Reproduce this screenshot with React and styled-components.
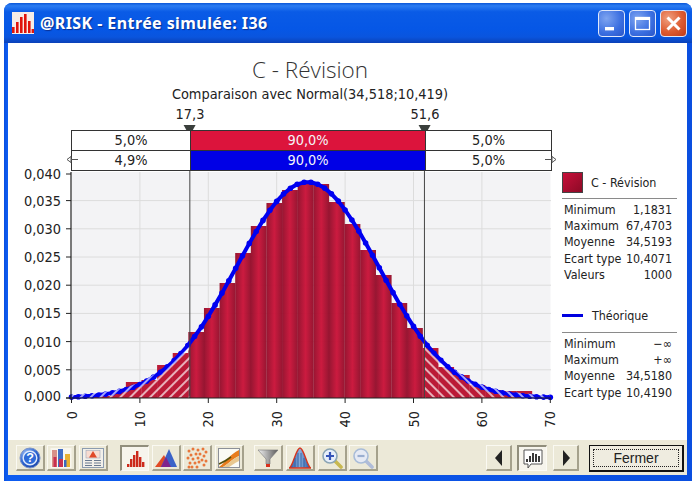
import React from "react";
import styled, { createGlobalStyle } from "styled-components";

const Global = createGlobalStyle`
  html, body { margin: 0; padding: 0; background: #fff; }
  #root { width: 693px; height: 481px; overflow: hidden; }
`;

const UI = `"DejaVu Sans Condensed", "DejaVu Sans", sans-serif`;

const Page = styled.div`
  width: 693px;
  height: 481px;
  padding: 3px 1px 0 4px;
  box-sizing: border-box;
  font-family: ${UI};
  color: #222;
`;
const Window = styled.div`
  height: 478px;
  display: flex;
  flex-direction: column;
  border-radius: 8px 8px 0 0;
  background: linear-gradient(90deg, #0a4fe0 0, #0d5cf0 3px, #0a4fe0 100%);
  overflow: hidden;
`;
const TitleBar = styled.div`
  height: 40px;
  flex: none;
  display: flex;
  align-items: center;
  padding: 0 5px 0 8px;
  box-sizing: border-box;
  background: linear-gradient(180deg, #0a56d8 0, #2b7cf2 7%, #0a5be6 22%, #0657e6 65%, #0a55de 85%, #0a41b8 100%);
`;
const AppIcon = styled.svg`
  width: 22px;
  height: 22px;
  flex: none;
`;
const TitleText = styled.div`
  margin-left: 6px;
  flex: 1;
  font: bold 16px "Noto Sans", sans-serif;
  letter-spacing: 0.42px;
  color: #fff;
  text-shadow: 1px 1px 1px #0a2f90;
`;
const WinBtn = styled.div`
  width: 27px;
  height: 27px;
  margin-left: ${(p) => p.$gap}px;
  border: 1px solid #dfe8fb;
  border-radius: 4px;
  box-sizing: border-box;
  display: flex;
  align-items: center;
  justify-content: center;
  background: ${(p) =>
    p.$close
      ? "radial-gradient(circle at 30% 30%, #f0a080, #dd5b30 55%, #c03a18)"
      : "radial-gradient(circle at 30% 30%, #7ea4f0, #3a6ee0 60%, #2a55c8)"};
`;
const Client = styled.div`
  flex: 1;
  margin: 0 5px 6px 4px;
  display: flex;
  flex-direction: column;
  min-height: 0;
`;
const Content = styled.div`
  flex: 1;
  background: #fff;
  display: flex;
  flex-direction: column;
`;
const ChartTitle = styled.div`
  width: 604px;
  margin-top: 13px;
  text-align: center;
  font: 300 22.5px/28px "Open Sans", sans-serif;
  color: #333;
`;
const Subtitle = styled.div`
  width: 604px;
  margin-top: 2px;
  text-align: center;
  font-size: 14.4px;
  line-height: 16px;
`;
const Columns = `
  display: grid;
  grid-template-columns: 119px 235px 127px;
  margin-left: 63px;
  width: 481px;
`;
const LimitRow = styled.div`
  ${Columns}
  height: 24px;
  margin-top: 4px;
  box-sizing: border-box;
  font-size: 14.4px;
  line-height: 16px;
`;
const Limit = styled.div`
  grid-column: ${(p) => p.$col};
  justify-self: start;
  position: relative;
  transform: translateX(-50%);
  text-align: center;
`;
const Pointer = styled.svg`
  position: absolute;
  left: 50%;
  margin-left: -7px;
  top: 18px;
  width: 14px;
  height: 12px;
  z-index: 2;
`;
const PercentTable = styled.div`
  ${Columns}
  height: 41px;
  position: relative;
  border: 1px solid #333;
  box-sizing: border-box;
  grid-template-columns: 118px 235px 126px;
  grid-template-rows: 20px 19px;
`;
const Cell = styled.div`
  background: ${(p) => p.$bg || "#fff"};
  color: ${(p) => (p.$bg ? "#f4f4f8" : "#222")};
  font-size: 14.4px;
  line-height: 19px;
  text-align: center;
  border-bottom: ${(p) => (p.$top ? "1px solid #333" : "none")};
  border-left: ${(p) => (p.$div ? "1px solid #333" : "none")};
  box-sizing: border-box;
`;
const ArrowMark = styled.svg`
  position: absolute;
  top: 24px;
  ${(p) => (p.$right ? "right: -5px;" : "left: -5px;")}
  width: 11px;
  height: 9px;
`;
const ChartRow = styled.div`
  display: flex;
  height: 265px;
`;
const Plot = styled.svg`
  width: 548px;
  height: 265px;
  flex: none;
  overflow: visible;
  font-family: ${UI};
`;
const Legend = styled.div`
  width: 115px;
  margin-left: 6px;
  padding-top: 1px;
  font-size: 12.4px;
  color: #222;
`;
const LegendHead = styled.div`
  display: flex;
  align-items: center;
  height: 21px;
  margin-top: ${(p) => p.$mt || 0}px;
  gap: ${(p) => p.$gap || 8}px;
`;
const Swatch = styled.div`
  width: 21px;
  height: 21px;
  box-sizing: border-box;
  border: 1px solid #444;
  background: linear-gradient(135deg, #c8103a, #8c0a26);
  flex: none;
`;
const BlueLine = styled.div`
  width: 21px;
  height: 3px;
  background: #0000e0;
  flex: none;
`;
const Rule = styled.div`
  height: 1px;
  background: #8a8a8a;
  margin: ${(p) => p.$m};
`;
const StatRow = styled.div`
  display: flex;
  justify-content: space-between;
  height: 16.2px;
  line-height: 16px;
  padding: 0 5px 0 2px;
`;
const Toolbar = styled.div`
  height: 35px;
  flex: none;
  background: #ece9d8;
  display: flex;
  align-items: flex-start;
  padding: 5px 0 0 7px;
  box-sizing: border-box;
`;
const ToolBtn = styled.div`
  width: ${(p) => p.$w || 29}px;
  height: 26px;
  margin-left: ${(p) => p.$gap || 2}px;
  flex: none;
  box-sizing: border-box;
  display: flex;
  align-items: center;
  justify-content: center;
  background: ${(p) => (p.$on ? "#f6f4ec" : "#ece9d8")};
  border: 1px solid;
  border-width: ${(p) => (p.$on ? "2px 1px 1px 2px" : "1px 2px 2px 1px")};
  border-color: ${(p) =>
    p.$on ? "#918e7c #fbfaf4 #fbfaf4 #918e7c" : "#faf9f2 #a5a18c #a5a18c #faf9f2"};
`;
const Icon = styled.svg`
  width: 22px;
  height: 22px;
`;
const CloseBtn = styled.div`
  width: 95px;
  height: 27px;
  margin-left: 10px;
  box-sizing: border-box;
  border: 1px solid #111;
  border-width: 1px 2px 2px 1px;
  background: #efece0;
  padding: 3px;
  flex: none;
`;
const CloseLabel = styled.div`
  height: 100%;
  border: 1px dotted #222;
  box-sizing: border-box;
  text-align: center;
  font: 14px/17px "Liberation Sans", sans-serif;
  color: #222;
`;

/* ---------- chart data ---------- */
const X = (v) => 71.5 + v * 6.84;
const Y = (v) => 398 - (v / 0.005) * 28.2;
const pdf = (v) =>
  (1 / (10.419 * Math.sqrt(2 * Math.PI))) * Math.exp(-((v - 34.518) ** 2) / (2 * 10.419 ** 2));
const curve = Array.from({ length: 71 }, (_, i) => [+X(i).toFixed(1), +Y(pdf(i)).toFixed(1)]);
const curvePts = curve.map((p) => p.join(",")).join(" ");
const tailPoly = (a, b) => {
  const pts = [];
  for (let v = a; v <= b + 0.001; v += 0.25) pts.push(`${X(v).toFixed(1)},${(Y(pdf(v)) - 2.5).toFixed(1)}`);
  return `${X(a)},397.5 ${pts.join(" ")} ${X(b)},397.5`;
};
const BW = 15.62;
const barsData = [396.5, 396, 392, 382, 380, 365, 353, 332, 308, 283, 253, 226, 203, 190, 184, 184, 202, 224, 250, 275, 303, 328, 348, 367, 375, 385, 390, 391, 391];

const Chart = () => (
  <Plot viewBox="8 171 548 265">
    <defs>
      <linearGradient id="bar" x1="0" x2="1" y1="0" y2="0">
        <stop offset="0" stopColor="#930d2a" />
        <stop offset="0.5" stopColor="#ca1238" />
        <stop offset="1" stopColor="#930d2a" />
      </linearGradient>
      <pattern id="hatchL" width="7" height="7" patternUnits="userSpaceOnUse" patternTransform="rotate(-45)">
        <line x1="0" x2="7" y1="2" y2="2" stroke="#fff" strokeWidth="1.3" />
      </pattern>
      <pattern id="hatchR" width="7" height="7" patternUnits="userSpaceOnUse" patternTransform="rotate(45)">
        <line x1="0" x2="7" y1="2" y2="2" stroke="#fff" strokeWidth="1.3" />
      </pattern>
    </defs>
    <rect x="71.5" y="172" width="479" height="226" fill="#f3f3f5" />
    {[10, 20, 30, 40, 50, 60].map((v) => (
      <line key={v} x1={X(v)} x2={X(v)} y1="172" y2="398" stroke="#dcdcdc" strokeWidth="1" />
    ))}
    {[0.005, 0.01, 0.015, 0.02, 0.025, 0.03, 0.035].map((v) => (
      <line key={v} x1="71" x2="551" y1={Y(v)} y2={Y(v)} stroke="#dcdcdc" strokeWidth="1" />
    ))}
    {barsData.map((t, k) => {
      const x = 79 + BW * k;
      const tail = x + BW < 196 || x > 420;
      return <rect key={k} x={x} y={t} width={BW + 0.2} height={398 - t} fill={tail ? "#b8112f" : "url(#bar)"} fillOpacity="0.96" />;
    })}
    <polyline points={curvePts} fill="none" stroke="#0000f0" strokeWidth="4" strokeLinejoin="round" />
    {curve.map(([cx, cy]) => (
      <circle key={cx} cx={cx} cy={cy} r="2.8" fill="#0000f0" />
    ))}
    <polygon points={tailPoly(0, 17.3)} fill="url(#hatchL)" />
    <polygon points={tailPoly(51.6, 70)} fill="url(#hatchR)" />
    <line x1={X(17.3)} x2={X(17.3)} y1="171" y2="398" stroke="#444" strokeWidth="1" />
    <line x1={X(51.6)} x2={X(51.6)} y1="171" y2="398" stroke="#444" strokeWidth="1" />
    <line x1="71" x2="71" y1="172" y2="398.5" stroke="#222" strokeWidth="1.2" />
    <line x1="66" x2="551" y1="398" y2="398" stroke="#222" strokeWidth="1.2" />
    {[0, 0.005, 0.01, 0.015, 0.02, 0.025, 0.03, 0.035, 0.04].map((v) => (
      <g key={v}>
        <line x1="66" x2="71" y1={v === 0.04 ? 174 : Y(v)} y2={v === 0.04 ? 174 : Y(v)} stroke="#222" strokeWidth="1" />
        <text x="61" y={(v === 0.04 ? 174 : v === 0 ? 396 : Y(v)) + 5} textAnchor="end" fontSize="14.4" fill="#222">
          {v.toFixed(3).replace(".", ",")}
        </text>
      </g>
    ))}
    {[0, 10, 20, 30, 40, 50, 60, 70].map((v) => (
      <g key={v}>
        <line x1={X(v)} x2={X(v)} y1="398" y2="403" stroke="#222" strokeWidth="1" />
        <text transform={`translate(${X(v) + 5} 411) rotate(-90)`} textAnchor="end" fontSize="14.4" fill="#222">
          {v}
        </text>
      </g>
    ))}
  </Plot>
);

const Stat = ({ k, v }) => (
  <StatRow>
    <span>{k}</span>
    <span>{v}</span>
  </StatRow>
);

const icons = {
  help: (
    <>
      <defs>
        <radialGradient id="hb" cx="0.35" cy="0.3" r="0.8">
          <stop offset="0" stopColor="#a8c8f8" />
          <stop offset="0.6" stopColor="#2a62d0" />
          <stop offset="1" stopColor="#1a3fa0" />
        </radialGradient>
      </defs>
      <circle cx="11" cy="11" r="10" fill="url(#hb)" stroke="#7b93c8" />
      <circle cx="11" cy="11" r="6.8" fill="#2e6ad8" stroke="#dfe9fb" strokeWidth="1.4" />
      <text x="11" y="15.4" textAnchor="middle" fontSize="12.5" fontWeight="bold" fill="#fff" fontFamily="Liberation Sans">?</text>
    </>
  ),
  bars: (
    <>
      <rect x="0.5" y="1" width="21" height="20" fill="#f8f6ee" />
      <rect x="2" y="3" width="5" height="17" fill="#d89088" />
      <rect x="8" y="2" width="5" height="18" fill="#3f6cc4" />
      <rect x="3.5" y="10" width="3" height="10" fill="#c83050" />
      <rect x="9" y="12" width="4" height="8" fill="#c83050" />
      <rect x="15" y="7" width="5" height="13" fill="#e8b030" />
      <rect x="14" y="13" width="2.5" height="7" fill="#3a68c0" />
    </>
  ),
  report: (
    <>
      <rect x="0.5" y="1.5" width="21" height="19" fill="#f2f0ea" stroke="#8c9cb0" />
      <rect x="4" y="3.5" width="14" height="7.5" fill="#f8dcd0" stroke="#a0a8b8" strokeWidth="0.6" />
      <polygon points="11,4 15,10.5 7,10.5" fill="#e04828" />
      <path d="M3 13.5h7M12 13.5h7M3 16h7M12 16h7M3 18.5h7M12 18.5h7" stroke="#6a7a90" strokeWidth="1" />
    </>
  ),
  hist: (
    <path
      d="M3 19v-3h2.4v3zM6 19v-8h2.4v8zM9 19v-12h2.4v12zM12 19V3h2.4v16zM15 19v-10h2.4v10zM18 19v-5h2.4v5z"
      fill="#cc2a1c"
    />
  ),
  peaks: (
    <>
      <polygon points="0,20 9,8 15,20" fill="#e04a26" />
      <polygon points="6,20 14,2 22,20" fill="#3a62c8" />
      <polygon points="6,20 11,10 16,20" fill="#80248c" />
    </>
  ),
  scatter: (
    <g fill="#e8763a">
      {[[3,4],[7,2],[12,3],[17,2],[20,5],[5,8],[10,7],[14,7],[18,9],[2,11],[7,12],[12,11],[16,13],[20,14],[4,16],[9,16],[13,15],[18,18],[6,20],[11,20],[3,20]].map(([x,y],i)=>(
        <circle key={i} cx={x} cy={y} r="1.5" />
      ))}
    </g>
  ),
  area: (
    <>
      <rect x="0.5" y="1.5" width="21" height="19" fill="#fafaf4" stroke="#8c9098" />
      <path d="M1 20C8 15 12 7 21 3V9C14 12 9 18 5 20z" fill="#e87c1c" />
      <path d="M5 20C9 18 14 12 21 9V14C16 16 13 19 11 20z" fill="#e8c890" />
      <path d="M1 17C6 15 9 13 13 10" stroke="#55500c" strokeWidth="1.6" fill="none" />
    </>
  ),
  funnel: (
    <>
      <defs>
        <linearGradient id="fn" x1="0" x2="1">
          <stop offset="0" stopColor="#f2f2f2" />
          <stop offset="1" stopColor="#5a5a5a" />
        </linearGradient>
      </defs>
      <polygon points="1,3 21,3 13,12 13,17 9,17 9,12" fill="url(#fn)" stroke="#777" strokeWidth="0.6" />
      <rect x="9" y="17" width="4" height="3" fill="#d8301c" />
    </>
  ),
  bell: (
    <>
      <defs>
        <linearGradient id="bl" x1="0" x2="1">
          <stop offset="0" stopColor="#1f4fa0" />
          <stop offset="0.5" stopColor="#8cb0dc" />
          <stop offset="1" stopColor="#1f4fa0" />
        </linearGradient>
      </defs>
      <path d="M0 21C4 20 7 1 11 1s7 19 11 20z" fill="url(#bl)" stroke="#d8341c" strokeWidth="1.4" />
      <path d="M6 20V11M9 20V6M12 20V6M15 20V11" stroke="#27589e" strokeWidth="0.8" />
    </>
  ),
  zoomIn: (
    <>
      <line x1="14" y1="14" x2="20" y2="20" stroke="#c8b850" strokeWidth="3.6" strokeLinecap="round" />
      <circle cx="9" cy="9" r="7" fill="#e6eefa" stroke="#8aa4b4" strokeWidth="1.6" />
      <path d="M5 9h8M9 5v8" stroke="#3454b8" strokeWidth="2.2" />
    </>
  ),
  zoomOut: (
    <>
      <line x1="14" y1="14" x2="20" y2="20" stroke="#b0bcd8" strokeWidth="3.6" strokeLinecap="round" />
      <circle cx="9" cy="9" r="7" fill="#e6eaf4" stroke="#a8bcd8" strokeWidth="1.6" />
      <path d="M5.5 9h7" stroke="#9aaed0" strokeWidth="2.2" />
    </>
  ),
  prev: <polygon points="14,3 14,19 7,11" fill="#222" />,
  next: <polygon points="8,3 8,19 15,11" fill="#222" />,
  note: (
    <>
      <path d="M2 2h18v14H9l-3 4v-4H2z" fill="#fff" stroke="#555" />
      <path d="M4 14v-3h2v3zM7 14V8h2v6zM10 14V5h2v9zM13 14V6h2v8zM16 14v-6h2v6z" fill="#3a3a3a" />
    </>
  ),
};

const Tool = ({ name, w, gap, on }) => (
  <ToolBtn $w={w} $gap={gap} $on={on}>
    <Icon viewBox="0 0 22 22">{icons[name]}</Icon>
  </ToolBtn>
);

const Marker = () => (
  <Pointer viewBox="0 0 14 12">
    <polygon points="1,1 13,1 7,12" fill="#3a3f3c" />
  </Pointer>
);

export default function App() {
  return (
    <Page>
      <Global />
      <Window>
        <TitleBar>
          <AppIcon viewBox="0 0 22 22">
            <rect width="22" height="22" fill="#f6ece6" />
            <path d="M0 21v-6h2.6v6zM4 21v-11h2.6v11zM8 21V5h2.6v16zM12 21V2h2.6v19zM16 21V9h2.6v12zM19.6 21v-4h2.4v4z" fill="#e0140c" />
          </AppIcon>
          <TitleText>@RISK - Entrée simulée: I36</TitleText>
          <WinBtn $gap={0}>
            <svg width="19" height="19" viewBox="0 0 19 19"><rect x="3" y="13" width="9" height="3.4" fill="#fff" /></svg>
          </WinBtn>
          <WinBtn $gap={4}>
            <svg width="19" height="19" viewBox="0 0 19 19"><rect x="2.5" y="3.5" width="14" height="12" fill="none" stroke="#fff" strokeWidth="1.3" /><rect x="2.5" y="3" width="14" height="3" fill="#fff" /></svg>
          </WinBtn>
          <WinBtn $gap={4} $close>
            <svg width="19" height="19" viewBox="0 0 19 19"><path d="M3.5 3.5l12 12M15.5 3.5l-12 12" stroke="#fff" strokeWidth="3" /></svg>
          </WinBtn>
        </TitleBar>
        <Client>
          <Content>
            <ChartTitle>C - Révision</ChartTitle>
            <Subtitle>Comparaison avec Normal(34,518;10,419)</Subtitle>
            <LimitRow>
              <Limit $col={2}>17,3<Marker /></Limit>
              <Limit $col={3}>51,6<Marker /></Limit>
            </LimitRow>
            <PercentTable>
              <Cell $top>5,0%</Cell>
              <Cell $top $div $bg="#dc143c">90,0%</Cell>
              <Cell $top $div>5,0%</Cell>
              <Cell>4,9%</Cell>
              <Cell $div $bg="#0000e6">90,0%</Cell>
              <Cell $div>5,0%</Cell>
              <ArrowMark viewBox="0 0 11 9"><path d="M0 4.5L4 1.5V7.5zM4 4.5H11" fill="#fff" stroke="#555" /></ArrowMark>
              <ArrowMark $right viewBox="0 0 11 9"><path d="M11 4.5L7 1.5V7.5zM7 4.5H0" fill="#fff" stroke="#555" /></ArrowMark>
            </PercentTable>
            <ChartRow>
              <Chart />
              <Legend>
                <LegendHead>
                  <Swatch />
                  <span>C - Révision</span>
                </LegendHead>
                <Rule $m="5px 0 3px" />
                <Stat k="Minimum" v="1,1831" />
                <Stat k="Maximum" v="67,4703" />
                <Stat k="Moyenne" v="34,5193" />
                <Stat k="Ecart type" v="10,4071" />
                <Stat k="Valeurs" v="1000" />
                <LegendHead $mt={22} $gap={9}>
                  <BlueLine />
                  <span>Théorique</span>
                </LegendHead>
                <Rule $m="6px 0 3px" />
                <Stat k="Minimum" v="−∞" />
                <Stat k="Maximum" v="+∞" />
                <Stat k="Moyenne" v="34,5180" />
                <Stat k="Ecart type" v="10,4190" />
              </Legend>
            </ChartRow>
          </Content>
          <Toolbar>
            <Tool name="help" gap={1} />
            <Tool name="bars" />
            <Tool name="report" gap={3} />
            <Tool name="hist" gap={12} on />
            <Tool name="peaks" gap={3} />
            <Tool name="scatter" gap={2} />
            <Tool name="area" gap={3} />
            <Tool name="funnel" gap={10} />
            <Tool name="bell" gap={3} />
            <Tool name="zoomIn" gap={3} />
            <Tool name="zoomOut" gap={2} />
            <Tool name="prev" w={26} gap={108} />
            <Tool name="note" w={30} gap={5} on />
            <Tool name="next" w={26} gap={6} />
            <CloseBtn><CloseLabel>Fermer</CloseLabel></CloseBtn>
          </Toolbar>
        </Client>
      </Window>
    </Page>
  );
}
